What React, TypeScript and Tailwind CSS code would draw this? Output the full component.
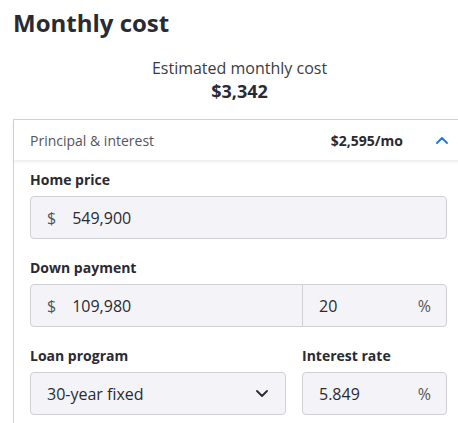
import React from 'react';

const font = { fontFamily: '"Open Sans", "Liberation Sans", sans-serif' };

const Label: React.FC<{ children: React.ReactNode }> = ({ children }) => (
    <div className="text-[14px] leading-5 font-bold text-[#2a2a33]">{children}</div>
);

const Chevron: React.FC<{ up?: boolean; className?: string }> = ({ up, className }) => (
    <svg width="12" height="7" viewBox="0 0 12 7" fill="none" className={className}>
        <polyline
            points={up ? '1,6 6,1 11,6' : '1,1 6,6 11,1'}
            stroke="currentColor"
            strokeWidth="1.8"
            strokeLinecap="round"
            strokeLinejoin="round"
        />
    </svg>
);

const App: React.FC = () => {
    return (
        <div className="w-[458px] h-[423px] overflow-hidden bg-white text-[#2a2a33]" style={font}>
            {/* panel is a bit wider than the window, its right edge is cut off */}
            <div className="ml-[13px] w-[453px] shrink-0">
                <h1 className="pt-[7px] text-[24px] leading-8 font-bold">Monthly cost</h1>

                <div className="mt-[19px] flex flex-col items-center">
                    <div className="text-[16px] leading-5 text-[#3b3b44]">Estimated monthly cost</div>
                    <div className="text-[18px] leading-[26px] font-bold">$3,342</div>
                </div>

                <div className="mt-[15px] border border-b-0 border-[#d1d1d5]">
                    <div className="h-[40px] flex items-center pl-[16px] pr-[17px] shadow-[0_2px_3px_rgba(0,0,0,0.08)]">
                        <span className="text-[14px] text-[#54545a]">Principal &amp; interest</span>
                        <span className="ml-auto text-[14px] font-bold">$2,595/mo</span>
                        <Chevron up className="ml-[33px] text-[#1277e1]" />
                    </div>

                    <div className="pl-[16px] pr-[18px] pt-[10px] pb-4">
                        <Label>Home price</Label>
                        <div className="mt-[6px] h-[43px] flex items-center rounded bg-[#f4f4f8] border border-[#d1d1d5] px-[16px] text-[16px]">
                            <span className="text-[#54545a]">$</span>
                            <span className="ml-[16px]">549,900</span>
                        </div>

                        <div className="mt-[19px]">
                            <Label>Down payment</Label>
                        </div>
                        <div className="mt-[6px] h-[43px] flex rounded bg-[#f4f4f8] border border-[#d1d1d5] text-[16px]">
                            <div className="w-[272px] flex items-center px-[16px] border-r border-[#d1d1d5]">
                                <span className="text-[#54545a]">$</span>
                                <span className="ml-[16px]">109,980</span>
                            </div>
                            <div className="flex-1 flex items-center pl-[16px] pr-[15px]">
                                <span>20</span>
                                <span className="ml-auto text-[#54545a]">%</span>
                            </div>
                        </div>

                        <div className="mt-[19px] grid grid-cols-[256px_1fr] gap-x-[16px]">
                            <Label>Loan program</Label>
                            <Label>Interest rate</Label>
                            <div className="mt-[6px] h-[43px] flex items-center rounded bg-[#f4f4f8] border border-[#d1d1d5] pl-[16px] pr-[17px] text-[16px]">
                                <span>30-year fixed</span>
                                <Chevron className="ml-auto text-[#2a2a33]" />
                            </div>
                            <div className="mt-[6px] h-[43px] flex items-center rounded bg-[#f4f4f8] border border-[#d1d1d5] pl-[16px] pr-[15px] text-[16px]">
                                <span>5.849</span>
                                <span className="ml-auto text-[#54545a]">%</span>
                            </div>
                        </div>
                    </div>
                </div>
            </div>
        </div>
    );
};

export default App;
